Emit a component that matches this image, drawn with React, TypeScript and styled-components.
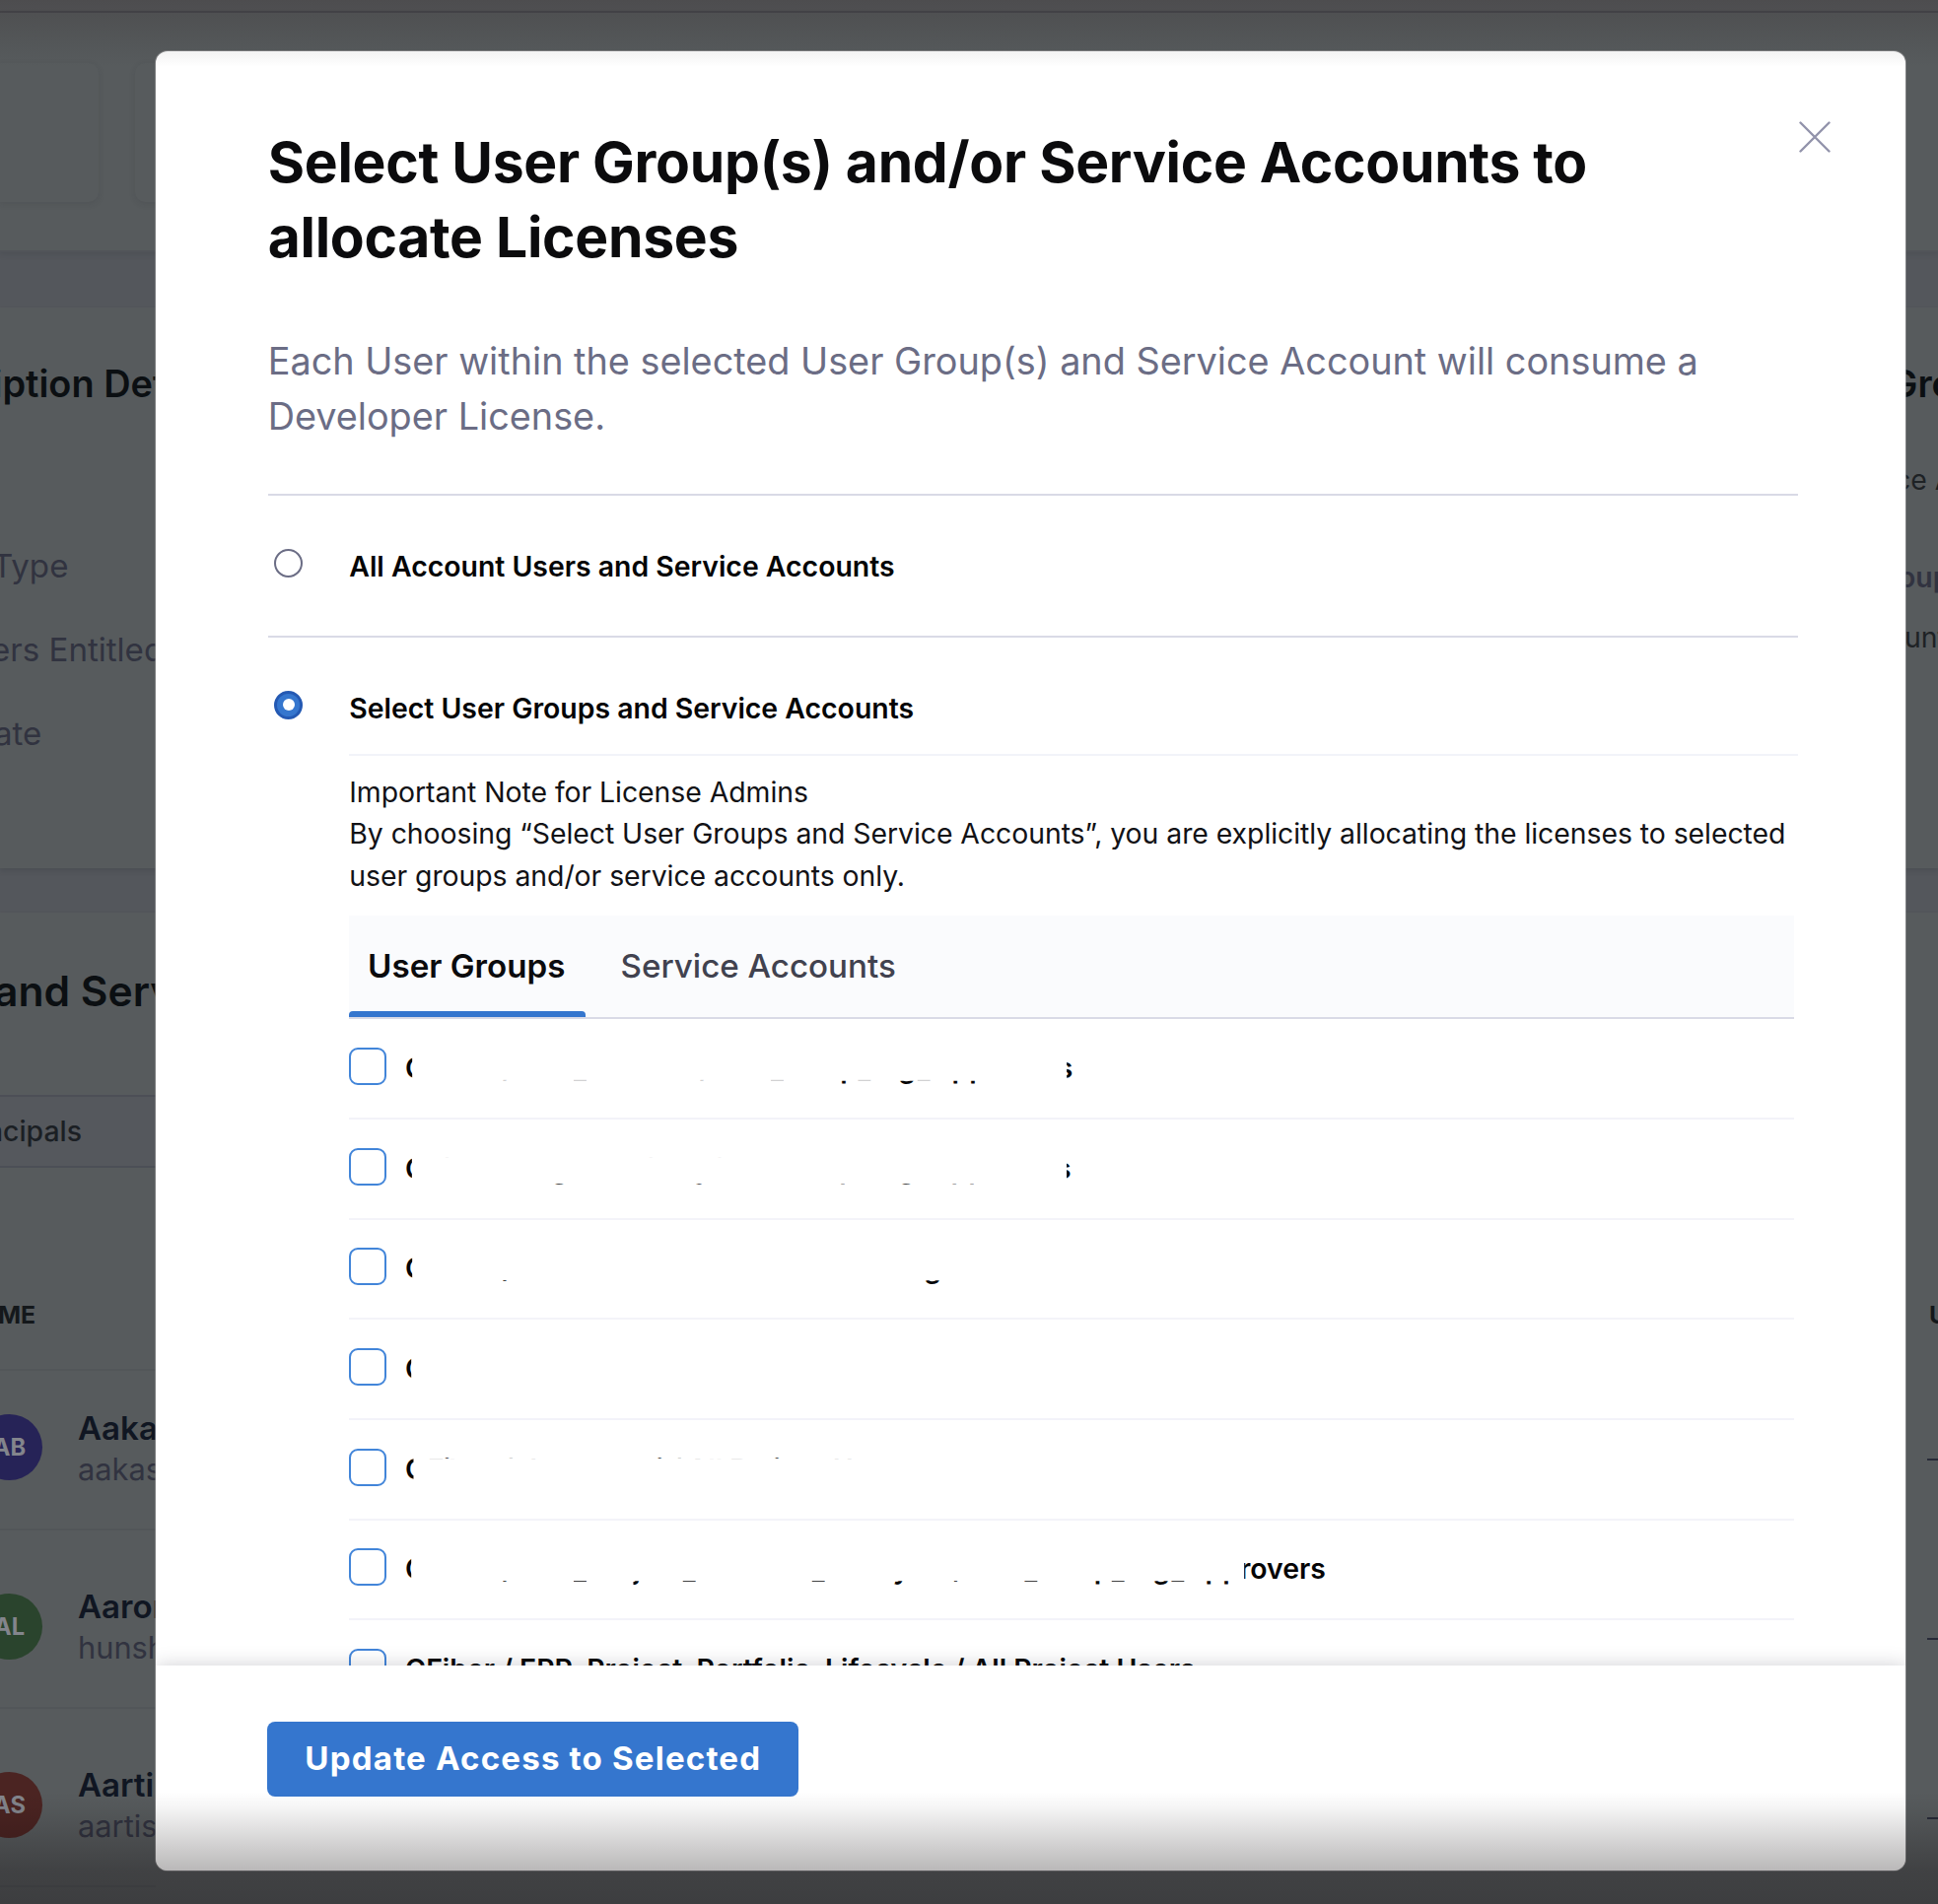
import React from 'react';
import styled, { createGlobalStyle } from 'styled-components';

const GlobalStyle = createGlobalStyle`
  * { box-sizing: border-box; }
  html, body { margin: 0; padding: 0; }
  body { font-family: Inter, "Liberation Sans", sans-serif; background: #575b5d; }
  h1, h2, p, ul { margin: 0; padding: 0; font-weight: inherit; }
`;

const Screen = styled.div`
  position: relative;
  width: 1966px;
  height: 1932px;
  overflow: hidden;
`;

/* ---------- dimmed page behind the dialog ---------- */

const Page = styled.div`
  display: flex;
  flex-direction: column;
  height: 1932px;
  background: #54575c;
`;

const TopBar = styled.div`
  height: 13px;
  flex: none;
  border-bottom: 2px solid #484a4f;
  background: #575a5d;
`;

const CardStrip = styled.div`
  display: flex;
  gap: 37px;
  height: 243px;
  flex: none;
  padding-top: 51px;
  background: #575b5d;
  border-bottom: 2px solid #515459;
  box-shadow: 0 2px 6px rgba(40, 42, 50, 0.16);
`;

const StatCard = styled.div<{ $width: number }>`
  width: ${(p) => p.$width}px;
  height: 141px;
  border-radius: 0 10px 10px 0;
  background: #575b5d;
  box-shadow: 0 2px 6px rgba(40, 42, 50, 0.13);
  &:last-child { border-radius: 10px; }
`;

const Panel = styled.section<{ $height: number; $gap: number }>`
  display: flex;
  justify-content: space-between;
  flex: none;
  height: ${(p) => p.$height}px;
  margin-top: ${(p) => p.$gap}px;
  background: #575b5d;
  box-shadow: 0 3px 5px rgba(40, 42, 50, 0.18);
`;

const Side = styled.div<{ $width: number }>`
  width: ${(p) => p.$width}px;
  overflow: hidden;
  white-space: nowrap;
`;

const PageText = styled.div<{
  $size: number;
  $weight?: number;
  $shift: number;
  $line: number;
  $top?: number;
  $color?: string;
}>`
  font-size: ${(p) => p.$size}px;
  font-weight: ${(p) => p.$weight ?? 400};
  line-height: ${(p) => p.$line}px;
  margin-top: ${(p) => p.$top ?? 0}px;
  margin-left: ${(p) => p.$shift}px;
  color: ${(p) => p.$color ?? '#313340'};
`;

const FilterBar = styled.div`
  height: 74px;
  margin-top: 75px;
  overflow: hidden;
  border-top: 2px solid #4c4f56;
  border-bottom: 2px solid #4c4f56;
  background: #55585d;
`;

const TableRow = styled.div<{ $height: number }>`
  display: flex;
  height: ${(p) => p.$height}px;
  border-bottom: 2px solid #525659;
`;

const Table = styled.div`
  display: flex;
  flex-direction: column;
`;

const Avatar = styled.div<{ $color: string }>`
  display: flex;
  align-items: center;
  justify-content: center;
  flex: none;
  width: 67px;
  height: 67px;
  margin: 45px 36px 0 -24px;
  border-radius: 50%;
  background: ${(p) => p.$color};
  color: #83858c;
  font-size: 23.7px;
  font-weight: 700;
`;

const Person = styled.div`
  padding-top: 39px;
`;

const Dash = styled.div`
  height: 2px;
  margin: 91px 0 0 22px;
  background: #282b38;
`;

/* ---------- dialog ---------- */

const Dialog = styled.div`
  position: absolute;
  left: 158px;
  top: 52px;
  display: flex;
  flex-direction: column;
  width: 1775px;
  height: 1846px;
  border-radius: 12px;
  overflow: hidden;
  background: #fff;
  box-shadow: 0 0 0 1px rgba(150, 150, 152, 0.6);
`;

const CloseButton = styled.button`
  position: absolute;
  top: 71px;
  right: 76px;
  width: 32px;
  height: 32px;
  padding: 0;
  border: 0;
  background: none;
  svg { display: block; }
`;

const Body = styled.div`
  flex: 1;
  min-height: 0;
  overflow: hidden;
  padding: 75px 109px 0 113.7px;
`;

const Title = styled.h1`
  height: 151px;
  font-size: 57px;
  font-weight: 700;
  letter-spacing: -0.29px;
  line-height: 75.5px;
  color: #0b0b0d;
`;

const Description = styled.p`
  margin-top: 59.6px;
  font-size: 37.8px;
  line-height: 56.8px;
  color: #6b6d85;
`;

const Option = styled.div<{ $first?: boolean }>`
  display: grid;
  grid-template-columns: 82.6px 1fr;
  margin-top: ${(p) => (p.$first ? 49.4 : 0)}px;
  height: ${(p) => (p.$first ? '144px' : 'auto')};
  border-top: 2px solid #d9dae6;
  padding-top: 50px;
`;

const Radio = styled.span<{ $checked?: boolean }>`
  display: flex;
  align-items: center;
  justify-content: center;
  width: 29px;
  height: 29px;
  margin: 4px 0 0 6.5px;
  border-radius: 50%;
  border: ${(p) => (p.$checked ? '3px solid #2459b3' : '2px solid #6b6d85')};
  background: ${(p) => (p.$checked ? '#3576ce' : '#fff')};
  &::after {
    content: '';
    width: 12px;
    height: 12px;
    border-radius: 50%;
    background: #fff;
  }
`;

const OptionLabel = styled.div`
  height: 43px;
  font-size: 28.4px;
  font-weight: 600;
  line-height: 43px;
  color: #050506;
`;

const Note = styled.div`
  margin-top: 25px;
  padding-top: 16px;
  border-top: 2px solid #f2f3f9;
  font-size: 28.4px;
  letter-spacing: -0.05px;
  line-height: 42.6px;
  color: #121216;
`;

const Tabs = styled.div`
  display: flex;
  gap: 16.8px;
  width: 1465.5px;
  height: 105px;
  margin-top: 19px;
  background: #fafbfd;
  border-bottom: 2px solid #d9dae6;
`;

const Tab = styled.div<{ $active?: boolean }>`
  position: relative;
  padding: 0 20.6px 0 18.8px;
  line-height: 103px;
  font-size: 33.15px;
  font-weight: ${(p) => (p.$active ? 600 : 500)};
  color: ${(p) => (p.$active ? '#0b0b0d' : '#41424f')};
  &::after {
    content: '';
    display: ${(p) => (p.$active ? 'block' : 'none')};
    position: absolute;
    left: 0;
    right: 0;
    bottom: 0;
    height: 6px;
    border-radius: 4px 4px 0 0;
    background: #3576ce;
  }
`;

const GroupList = styled.ul`
  width: 1465.5px;
  list-style: none;
`;

const GroupRow = styled.li`
  display: flex;
  gap: 18.6px;
  height: 101.7px;
  padding-top: 28.5px;
  border-bottom: 2px solid #f3f3f9;
`;

const Checkbox = styled.span`
  flex: none;
  width: 38px;
  height: 38px;
  border: 2.4px solid #4285d9;
  border-radius: 9px;
  background: #fff;
`;

const GroupName = styled.div`
  position: relative;
  flex: 1;
  height: 42px;
  font-size: 28.4px;
  font-weight: 600;
  line-height: 42px;
  white-space: nowrap;
  color: #050506;
`;

type Sliver = { t: string; x?: number; from?: number; to?: number; left?: number; right?: string; faint?: boolean };

const Piece = styled.span<{ $s: Sliver }>`
  position: absolute;
  top: 0;
  height: 42px;
  left: ${(p) => p.$s.x ?? 0}px;
  opacity: ${(p) => (p.$s.faint ? 0.18 : 1)};
  transform: ${(p) => (p.$s.x === undefined ? 'none' : 'translateX(-50%)')};
  clip-path: ${({ $s }) =>
    `inset(${$s.from ?? 0}px ${$s.right ?? '0px'} ${42 - ($s.to ?? 42)}px ${$s.left ?? 0}px)`};
`;

const Footer = styled.div`
  position: relative;
  flex: none;
  height: 208px;
  padding: 56.5px 0 0 113.3px;
  background: #fff;
  box-shadow: 0 0 18px rgba(40, 41, 61, 0.22);
`;

const PrimaryButton = styled.button`
  width: 539px;
  height: 76px;
  padding: 0;
  border: 0;
  border-radius: 8px;
  background: #3576ce;
  color: #fff;
  font: 700 33.1px/75px Inter, sans-serif;
  letter-spacing: 1.17px;
`;

const Shade = styled.div<{ $edge: 'top' | 'bottom' }>`
  position: absolute;
  left: 0;
  right: 0;
  pointer-events: none;
  ${(p) =>
    p.$edge === 'top'
      ? 'top: 0; height: 68px; background: linear-gradient(rgba(54,46,46,.3), rgba(45,42,42,.06) 76%, rgba(45,42,42,0));'
      : 'bottom: 0; height: 114px; background: linear-gradient(rgba(6,0,2,0), rgba(6,0,2,.04) 14%, rgba(6,0,2,.28) 70%, rgba(6,0,2,.32));'}
`;

const g = (w: number): Sliver => ({ t: 'G', right: `calc(100% - ${w}px)` });
const low = (t: string, x: number, from: number, faint = false): Sliver => ({ t, x: x - 410.7, from, faint });
const high = (t: string, x: number, to: number, faint = true): Sliver => ({ t, x: x - 410.7, to, faint });

const groups: Sliver[][] = [
  [
    g(7.3),
    low('/', 515, 33, true), low('_', 588.3, 33, true), low('/', 715, 33, true), low('_', 788.3, 33, true),
    low('p', 861, 34), low('_', 876.7, 33, true), low('g', 920, 34), low('_', 937, 33, true), low('pp', 983, 34),
    { t: 's', x: 669.6, left: 9.5 },
  ],
  [
    g(7),
    high('i', 453.3, 9.6), high('/', 515, 9), high('i', 660, 9.6), high('i', 729.7, 9.6),
    low('g', 567.7, 36.6), low('y', 713, 36.6), low('p', 860, 36.6), low('g', 919.6, 36.6), low('pp', 982, 36.6),
    { t: 's', x: 668, left: 11 },
  ],
  [g(7.3), low('/', 515, 33), low('g', 946, 33)],
  [g(6.3), high('i', 453.3, 9), high('/', 515, 9), high('i', 569, 9)],
  [
    g(8.6),
    high('F', 442, 11), high('i', 453.3, 10.2, false), high('b', 464, 10.6), high('/', 515, 9.6, false), high('I', 541, 11),
    high('i', 669, 10.2, false), high('/', 686, 9.6, false), high('A', 707.7, 11), high('ll', 725.5, 10.6),
    high('P', 749, 11), high('j', 788, 10.2, false), high('U', 855, 11),
  ],
  [
    g(6.3),
    low('/', 515, 33), low('_', 588.3, 33), low('j', 646, 33), low('_', 699, 33), low('_', 830, 33),
    low('y', 914, 33), low('/', 972.5, 33), low('_', 1045.7, 33), low('p', 1118.5, 33), low('_', 1134, 33),
    low('g', 1178, 33), low('_', 1194.7, 33), low('pp', 1240, 33),
    { t: 'rovers', x: 890.4, left: 4.5 },
  ],
  [{ t: 'GFiber / EPP_Project_Portfolio_Lifecycle / All Project Users' }],
];

const people = [
  { initials: 'AB', color: '#262357', name: 'Aakash', email: 'aakash' },
  { initials: 'AL', color: '#2a442d', name: 'Aaron', email: 'hunsh' },
  { initials: 'AS', color: '#4b2422', name: 'Aarti', email: 'aartis' },
];

export default function App() {
  return (
    <Screen>
      <GlobalStyle />
      <Page>
        <TopBar />
        <CardStrip>
          <StatCard $width={100} />
          <StatCard $width={400} />
        </CardStrip>
        <Panel $height={569} $gap={56}>
          <Side $width={158}>
            <PageText $size={37.9} $weight={600} $shift={-7.5} $line={60} $top={47} $color="#0b0f12">iption Details</PageText>
            <PageText $size={33.1} $shift={-8} $line={85} $top={113}>Type</PageText>
            <PageText $size={33.1} $shift={-9} $line={85}>ers Entitled</PageText>
            <PageText $size={33.1} $shift={-6} $line={85}>ate</PageText>
          </Side>
          <Side $width={33}>
            <PageText $size={37.9} $weight={600} $shift={-16} $line={60} $top={47} $color="#0b0f12">Gro</PageText>
            <PageText $size={28.4} $shift={-11} $line={60} $top={38} $color="#1e2225">ce Accounts</PageText>
            <PageText $size={28.4} $weight={600} $shift={-7} $line={60} $top={39}>oup</PageText>
            <PageText $size={28.4} $shift={-1} $line={60} $top={1} $color="#1e2225">unts</PageText>
          </Side>
        </Panel>
        <Panel $height={1006} $gap={45}>
          <Side $width={158}>
            <Table>
              <PageText $size={42.6} $weight={600} $shift={-6} $line={60} $top={50} $color="#0b0f12">and Service</PageText>
              <FilterBar>
                <PageText $size={28.4} $weight={500} $shift={-14} $line={70} $color="#1b1f24">ncipals</PageText>
              </FilterBar>
              <TableRow $height={206}>
                <PageText $size={24.8} $weight={700} $shift={-2} $line={60} $top={119} $color="#14181b">ME</PageText>
              </TableRow>
              {people.map((p, i) => (
                <TableRow key={p.initials} $height={i === 0 ? 162 : 181}>
                  <Avatar $color={p.color} style={{ marginTop: i === 0 ? 44 : 64 }}>{p.initials}</Avatar>
                  <Person style={{ paddingTop: i === 0 ? 38 : 57 }}>
                    <PageText $size={33.1} $weight={600} $shift={0} $line={40} $color="#101622">{p.name}</PageText>
                    <PageText $size={30.8} $shift={0} $line={40} $top={2}>{p.email}</PageText>
                  </Person>
                </TableRow>
              ))}
            </Table>
          </Side>
          <Side $width={33}>
            <PageText $size={24.8} $weight={700} $shift={24} $line={60} $top={378} $color="#14181b">U</PageText>
            <Dash style={{ marginTop: 116 }} />
            <Dash style={{ marginTop: 180 }} />
            <Dash style={{ marginTop: 180 }} />
          </Side>
        </Panel>
      </Page>

      <Dialog role="dialog">
        <CloseButton aria-label="Close">
          <svg width="32" height="32" viewBox="0 0 32 32" fill="none" stroke="#9293ab" strokeWidth="2.4" strokeLinecap="round">
            <path d="M1.5 1.5 30.5 30.5M30.5 1.5 1.5 30.5" />
          </svg>
        </CloseButton>
        <Body>
          <Title>Select User Group(s) and/or Service Accounts to<br />allocate Licenses</Title>
          <Description>
            Each User within the selected User Group(s) and Service Account will consume a<br />Developer License.
          </Description>
          <Option $first>
            <Radio />
            <OptionLabel>All Account Users and Service Accounts</OptionLabel>
          </Option>
          <Option>
            <Radio $checked />
            <div>
              <OptionLabel>Select User Groups and Service Accounts</OptionLabel>
              <Note>
                Important Note for License Admins<br />
                By choosing “Select User Groups and Service Accounts”, you are explicitly allocating the licenses to selected<br />
                user groups and/or service accounts only.
              </Note>
              <Tabs>
                <Tab $active>User Groups</Tab>
                <Tab>Service Accounts</Tab>
              </Tabs>
              <GroupList>
                {groups.map((pieces, i) => (
                  <GroupRow key={i}>
                    <Checkbox />
                    <GroupName>
                      {pieces.map((s, j) => (
                        <Piece key={j} $s={s}>{s.t}</Piece>
                      ))}
                    </GroupName>
                  </GroupRow>
                ))}
              </GroupList>
            </div>
          </Option>
        </Body>
        <Footer>
          <PrimaryButton>Update Access to Selected</PrimaryButton>
        </Footer>
      </Dialog>
      <Shade $edge="top" />
      <Shade $edge="bottom" />
    </Screen>
  );
}
